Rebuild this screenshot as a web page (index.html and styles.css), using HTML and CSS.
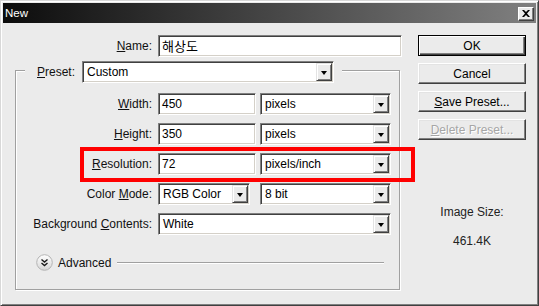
FILE: index.html
```html
<!DOCTYPE html>
<html lang="ko">
<head>
  <meta charset="UTF-8" />
  <title>New</title>
  <link rel="stylesheet" href="styles.css">
</head>
<body>
  <div class="window">
    <div class="titlebar">
      <span class="title">New</span>
      <div class="close">
        <svg width="8" height="7" viewBox="0 0 8 7"><path d="M0 0h2l2 2 2-2h2L5 3.5 8 7H6L4 5 2 7H0l3-3.5z" fill="#000"/></svg>
      </div>
    </div>

    <div class="content">
      <div class="main">
        <div class="row">
          <span class="label name-label"><u>N</u>ame:</span>
          <div class="input name-input">해상도</div>
        </div>

        <div class="group">
          <div class="legend">
            <span class="preset-label"><u>P</u>reset:</span>
            <div class="select preset-select"><span>Custom</span><i class="arrow"></i></div>
          </div>

          <div class="fields">
            <div class="row">
              <span class="label"><u>W</u>idth:</span>
              <div class="input num">450</div>
              <div class="select unit"><span>pixels</span><i class="arrow"></i></div>
            </div>
            <div class="row">
              <span class="label"><u>H</u>eight:</span>
              <div class="input num">350</div>
              <div class="select unit"><span>pixels</span><i class="arrow"></i></div>
            </div>
            <div class="row highlight">
              <span class="label"><u>R</u>esolution:</span>
              <div class="input num">72</div>
              <div class="select unit"><span>pixels/inch</span><i class="arrow"></i></div>
              <div class="mark"></div>
            </div>
            <div class="row">
              <span class="label">Color <u>M</u>ode:</span>
              <div class="select mode"><span>RGB Color</span><i class="arrow"></i></div>
              <div class="select unit depth"><span>8 bit</span><i class="arrow"></i></div>
            </div>
            <div class="row">
              <span class="label">Background <u>C</u>ontents:</span>
              <div class="select bg"><span>White</span><i class="arrow"></i></div>
            </div>
          </div>

          <div class="advanced">
            <svg class="adv-icon" width="17" height="17" viewBox="0 0 17 17">
              <defs>
                <linearGradient id="advg" x1="0" y1="0" x2="0" y2="1">
                  <stop offset="0" stop-color="#ffffff"/>
                  <stop offset="1" stop-color="#d6d6d6"/>
                </linearGradient>
              </defs>
              <circle cx="8.5" cy="8.5" r="7.8" fill="url(#advg)" stroke="#b4b4b4"/>
              <path d="M5.5 5.5l3 2.5 3-2.5M5.5 9l3 2.5 3-2.5" fill="none" stroke="#1a1a1a" stroke-width="1.4"/>
            </svg>
            <span>Advanced</span>
            <div class="rule"></div>
          </div>
        </div>
      </div>

      <div class="side">
        <div class="btn default">OK</div>
        <div class="btn">Cancel</div>
        <div class="btn"><u>S</u>ave Preset...</div>
        <div class="btn disabled"><u>D</u>elete Preset...</div>
        <div class="info">Image Size:</div>
        <div class="info size">461.4K</div>
      </div>
    </div>
  </div>
</body>
</html>
```

FILE: styles.css
```css
* {
  box-sizing: border-box;
}

body {
  margin: 0;
  background: #ebebeb;
  font-family: "Liberation Sans", Arial, "Noto Sans CJK KR", sans-serif;
  font-size: 12px;
  line-height: 14px;
  color: #111;
}

u {
  text-decoration: underline;
  text-underline-offset: 1px;
}

.window {
  width: 539px;
  height: 306px;
  background: #ebebeb;
  border: 1px solid;
  border-color: #d8d8d8 #404040 #404040 #d8d8d8;
  box-shadow: inset 1px 1px 0 #fff, inset -1px -1px 0 #808080;
  padding: 2px;
  display: flex;
  flex-direction: column;
}

.titlebar {
  height: 20px;
  background: linear-gradient(to right, #0c0c0c, #808080);
  color: #fff;
  display: flex;
  align-items: center;
  justify-content: space-between;
  padding: 0 2px 0 2px;
}

.title {
  font-size: 11.5px;
}

.close {
  width: 16px;
  height: 14px;
  margin-top: 1px;
  background: #ebebeb;
  border: 1px solid;
  border-color: #fff #404040 #404040 #fff;
  box-shadow: inset -1px -1px 0 #808080;
  display: flex;
  align-items: center;
  justify-content: center;
}

.content {
  display: flex;
  padding: 12px 10px 0 12px;
}

.main {
  width: 387px;
}

.side {
  width: 108px;
  margin-left: 16px;
  display: flex;
  flex-direction: column;
}

.row {
  display: flex;
  align-items: center;
  height: 22px;
  position: relative;
}

.label {
  width: 136px;
  margin-right: 6px;
  text-align: right;
  white-space: nowrap;
}

.name-label {
  width: 137px;
}

.input,
.select {
  height: 22px;
  background: #fff;
  border: 1px solid;
  border-color: #808080 #fff #fff #808080;
  box-shadow: inset 1px 1px 0 #404040, inset -1px -1px 0 #d4d0c8;
  display: flex;
  align-items: center;
  padding-left: 3px;
  white-space: nowrap;
  color: #000;
}

.name-input {
  width: 244px;
  font-family: "Noto Sans CJK KR", sans-serif;
  font-size: 13px;
}

.num {
  width: 98px;
}

.select span {
  flex: 1;
  padding-left: 1px;
}

.arrow {
  width: 16px;
  height: 18px;
  margin-right: 1px;
  background: #ebebeb;
  border: 1px solid;
  border-color: #e3e3e3 #404040 #404040 #e3e3e3;
  box-shadow: inset 1px 1px 0 #fff, inset -1px -1px 0 #808080;
  display: flex;
  align-items: center;
  justify-content: center;
}

.arrow::after {
  content: "";
  border-left: 3.5px solid transparent;
  border-right: 3.5px solid transparent;
  border-top: 4px solid #000;
  margin-top: 1px;
}

.unit {
  width: 131px;
  margin-left: 4px;
}

.mode {
  width: 92px;
}

.depth {
  margin-left: 10px;
}

.bg {
  width: 233px;
}

.preset-select {
  width: 252px;
}

.group {
  width: 385px;
  height: 220px;
  margin-top: 13px;
  border: 1px solid #a0a0a0;
  box-shadow: inset 1px 1px 0 #fff, 1px 1px 0 #fff;
  display: flex;
  flex-direction: column;
}

.legend {
  align-self: flex-start;
  display: flex;
  align-items: center;
  height: 22px;
  margin: -10px 0 0 9px;
  padding: 0 8px 0 12px;
  background: #ebebeb;
}

.preset-label {
  width: 45px;
}

.fields {
  display: flex;
  flex-direction: column;
  gap: 8px;
  margin-top: 10px;
}

.mark {
  position: absolute;
  left: 64px;
  top: -6px;
  width: 335px;
  height: 35px;
  border: 4px solid #ff0000;
}

.advanced {
  display: flex;
  align-items: center;
  height: 17px;
  margin-top: 19px;
  padding-left: 20px;
  margin-right: 15px;
}

.adv-icon {
  margin-right: 5px;
}

.rule {
  flex: 1;
  height: 2px;
  margin-left: 6px;
  border-top: 1px solid #a0a0a0;
  border-bottom: 1px solid #fff;
}

.btn {
  height: 21px;
  margin-bottom: 7px;
  background: #ebebeb;
  border: 1px solid;
  border-color: #fff #404040 #404040 #fff;
  box-shadow: inset -1px -1px 0 #808080, inset 1px 1px 0 #e3e3e3;
  display: flex;
  align-items: center;
  justify-content: center;
  color: #000;
}

.btn.default {
  border: 1px solid #000;
  box-shadow: inset 1px 1px 0 #fff, inset -1px -1px 0 #404040, inset -2px -2px 0 #808080;
}

.btn.disabled {
  color: #a6a6a6;
  text-shadow: 1px 1px 0 #fff;
}

.info {
  text-align: center;
  color: #222;
  margin-top: 58px;
}

.info.size {
  margin-top: 15px;
}
```
